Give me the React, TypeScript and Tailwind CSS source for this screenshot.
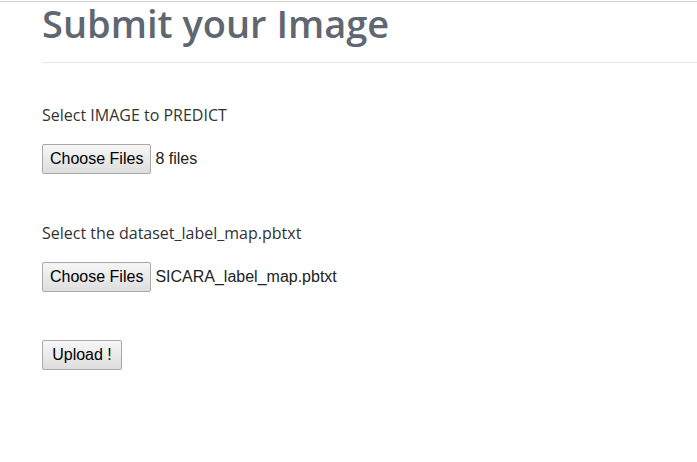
import React from "react";

const ubuntu = { fontFamily: '"Open Sans", "Noto Sans", sans-serif' };

function FileRow({ label }: { label: string }) {
  return (
    <div className="flex items-center h-[30px]">
      <button className="h-[30px] px-[7px] border border-[#a9a9a9] rounded-[2px] bg-gradient-to-b from-[#f6f6f6] to-[#dedede] text-[16px] text-black leading-none font-['Liberation_Sans',Arial,sans-serif]">
        Choose Files
      </button>
      <span className="ml-[4px] text-[16px] text-[#222] font-['Liberation_Sans',Arial,sans-serif]">{label}</span>
    </div>
  );
}

export default function App() {
  return (
    <div className="w-[697px] h-[462px] bg-white overflow-hidden">
      <div className="h-[1px] mt-[1px] bg-[#d0d0d0]" />
      <div className="pl-[42px]">
        <h1
          className="text-[38px] leading-[44px] font-semibold text-[#5f6771] mt-[-1px]"
          style={ubuntu}
        >
          Submit your Image
        </h1>
        <div className="h-[1px] bg-[#e5e5e5] mt-[17px]" />
        <p className="mt-[43px] text-[16px] leading-[18px] text-[#333]" style={ubuntu}>
          Select IMAGE to PREDICT
        </p>
        <div className="mt-[20px]">
          <FileRow label="8 files" />
        </div>
        <p className="mt-[50px] text-[16px] leading-[18px] text-[#333]" style={ubuntu}>
          Select the dataset_label_map.pbtxt
        </p>
        <div className="mt-[20px]">
          <FileRow label="SICARA_label_map.pbtxt" />
        </div>
        <div className="mt-[48px]">
          <button className="h-[30px] w-[80px] border border-[#a9a9a9] rounded-[2px] bg-gradient-to-b from-[#f6f6f6] to-[#dedede] text-[16px] text-black leading-none font-['Liberation_Sans',Arial,sans-serif]">
            Upload !
          </button>
        </div>
      </div>
    </div>
  );
}
